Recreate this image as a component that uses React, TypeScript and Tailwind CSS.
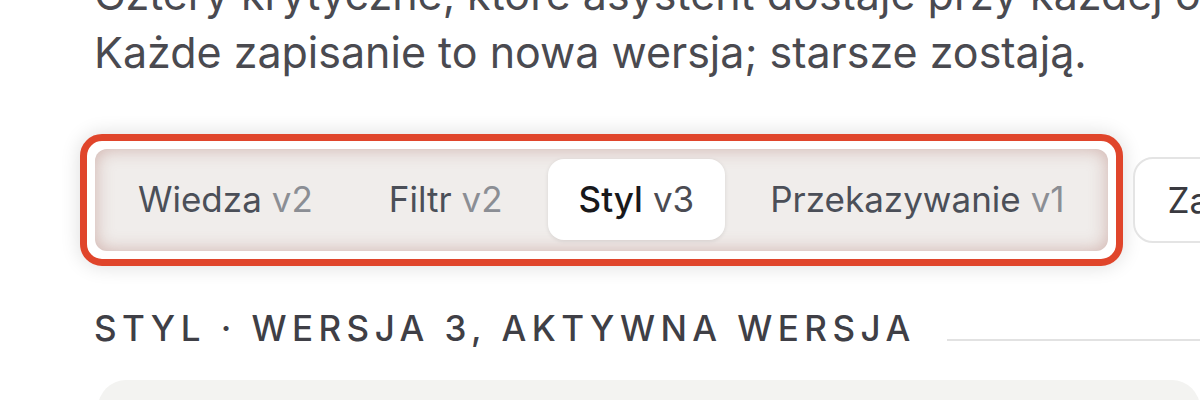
const tabs = [
  { name: 'Wiedza', version: 'v2' },
  { name: 'Filtr', version: 'v2' },
  { name: 'Styl', version: 'v3' },
  { name: 'Przekazywanie', version: 'v1' },
];

const App = () => {
  const active = 'Styl';

  return (
    <div className="h-[400px] w-[1200px] overflow-hidden bg-white font-['Inter',sans-serif]">
      <div className="pl-[94px]">
        <p className="-mt-[35px] whitespace-nowrap text-[43px] leading-[58px] text-[#4a4a50]">
          Cztery krytyczne, które asystent dostaje przy każdej odpowiedzi.
          <br />
          Każde zapisanie to nowa wersja; starsze zostają.
        </p>
      </div>

      <div className="mt-[53px] flex items-center pl-[80px]">
        <div className="rounded-[22px] border-[7px] border-[#e0452b] bg-white p-[8px] shadow-[0_0_20px_rgba(0,0,0,0.14)]">
          <div className="flex gap-[14px] rounded-[12px] bg-[#f0edeb] px-[12px] pb-[11px] pt-[10px] shadow-[inset_0_0_18px_rgba(165,95,85,0.42)]">
            {tabs.map((tab) => {
              const isActive = tab.name === active;
              return (
                <div
                  key={tab.name}
                  className={
                    isActive
                      ? 'flex h-[81px] items-center rounded-[16px] bg-white px-[31px] text-[35px] shadow-[0_1px_4px_rgba(0,0,0,0.1)]'
                      : 'flex h-[81px] items-center px-[31px] text-[35px]'
                  }
                >
                  <span className={isActive ? 'font-medium text-[#18181b]' : 'text-[#4b4f58]'}>{tab.name}</span>
                  <span className={isActive ? 'ml-[10px] text-[#4b4b52]' : 'ml-[10px] text-[#8b8e94]'}>
                    {tab.version}
                  </span>
                </div>
              );
            })}
          </div>
        </div>
        <button className="ml-[10px] flex h-[86px] shrink-0 items-center whitespace-nowrap rounded-[20px] border-2 border-[#e4e4e4] bg-white px-[33px] text-[35px] text-[#3a3a40]">
          Zapisz nową wersję
        </button>
      </div>

      <div className="mt-[40px] flex items-start gap-[31px] pl-[94px]">
        <h3 className="whitespace-nowrap text-[35px] font-medium uppercase leading-[44px] tracking-[0.155em] text-[#3f3f46]">
          Styl · wersja 3, aktywna wersja
        </h3>
        <div className="mt-[33px] h-[2px] flex-1 bg-[#e2e2e2]" />
      </div>

      <div className="ml-[98px] mt-[30px] h-[200px] rounded-[28px] bg-[#f3f3f1]" />
    </div>
  );
};

export default App;
